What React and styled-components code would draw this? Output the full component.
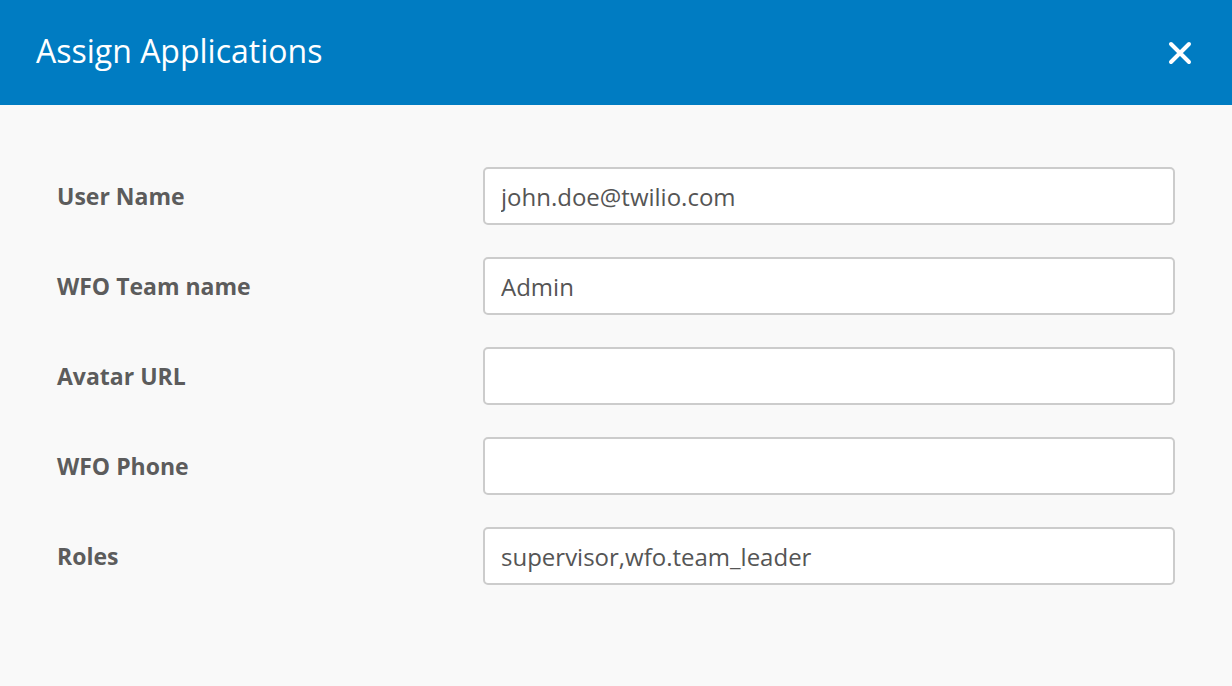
import React from "react"
import styled, { createGlobalStyle } from "styled-components"

const fields = [
  { label: "User Name", value: "john.doe@twilio.com" },
  { label: "WFO Team name", value: "Admin" },
  { label: "Avatar URL", value: "" },
  { label: "WFO Phone", value: "" },
  { label: "Roles", value: "supervisor,wfo.team_leader" },
]

const App = () => (
  <Modal>
    <GlobalStyle />
    <Header>
      <Title>Assign Applications</Title>
      <CloseButton type="button" aria-label="Close">
        <svg width="24" height="24" viewBox="0 0 24 24">
          <path
            d="M3 3 L21 21 M21 3 L3 21"
            stroke="#fff"
            strokeWidth="4"
            strokeLinecap="round"
          />
        </svg>
      </CloseButton>
    </Header>
    <Form>
      {fields.map((f) => (
        <Row key={f.label}>
          <Label>{f.label}</Label>
          <Input defaultValue={f.value} />
        </Row>
      ))}
    </Form>
  </Modal>
)

const GlobalStyle = createGlobalStyle`
  body {
    margin: 0;
    background: #f9f9f9;
    font-family: "Open Sans", Lato, sans-serif;
  }
`

const Modal = styled.div`
  width: 1232px;
  height: 686px;
  background: #f9f9f9;
  display: flex;
  flex-direction: column;
`

const Header = styled.div`
  height: 105px;
  background: #007cc2;
  display: flex;
  align-items: center;
  justify-content: space-between;
  padding: 0 40px 0 36px;
  box-sizing: border-box;
`

const Title = styled.h1`
  margin: 0 0 4px;
  color: #ffffff;
  font-size: 32px;
  font-weight: 400;
  line-height: 1;
`

const CloseButton = styled.button`
  background: none;
  border: none;
  padding: 0;
  display: flex;
  cursor: pointer;
`

const Form = styled.div`
  display: flex;
  flex-direction: column;
  gap: 32px;
  padding: 62px 57px 0;
`

const Row = styled.div`
  display: grid;
  grid-template-columns: 426px 1fr;
  align-items: center;
`

const Label = styled.label`
  color: #5c5c5c;
  font-size: 23px;
  font-weight: 700;
`

const Input = styled.input`
  height: 58px;
  box-sizing: border-box;
  border: 2px solid #cccccc;
  border-radius: 5px;
  background: #ffffff;
  padding: 0 16px;
  font-family: "Open Sans", Lato, sans-serif;
  font-size: 24px;
  color: #555555;
  outline: none;
`

export default App
